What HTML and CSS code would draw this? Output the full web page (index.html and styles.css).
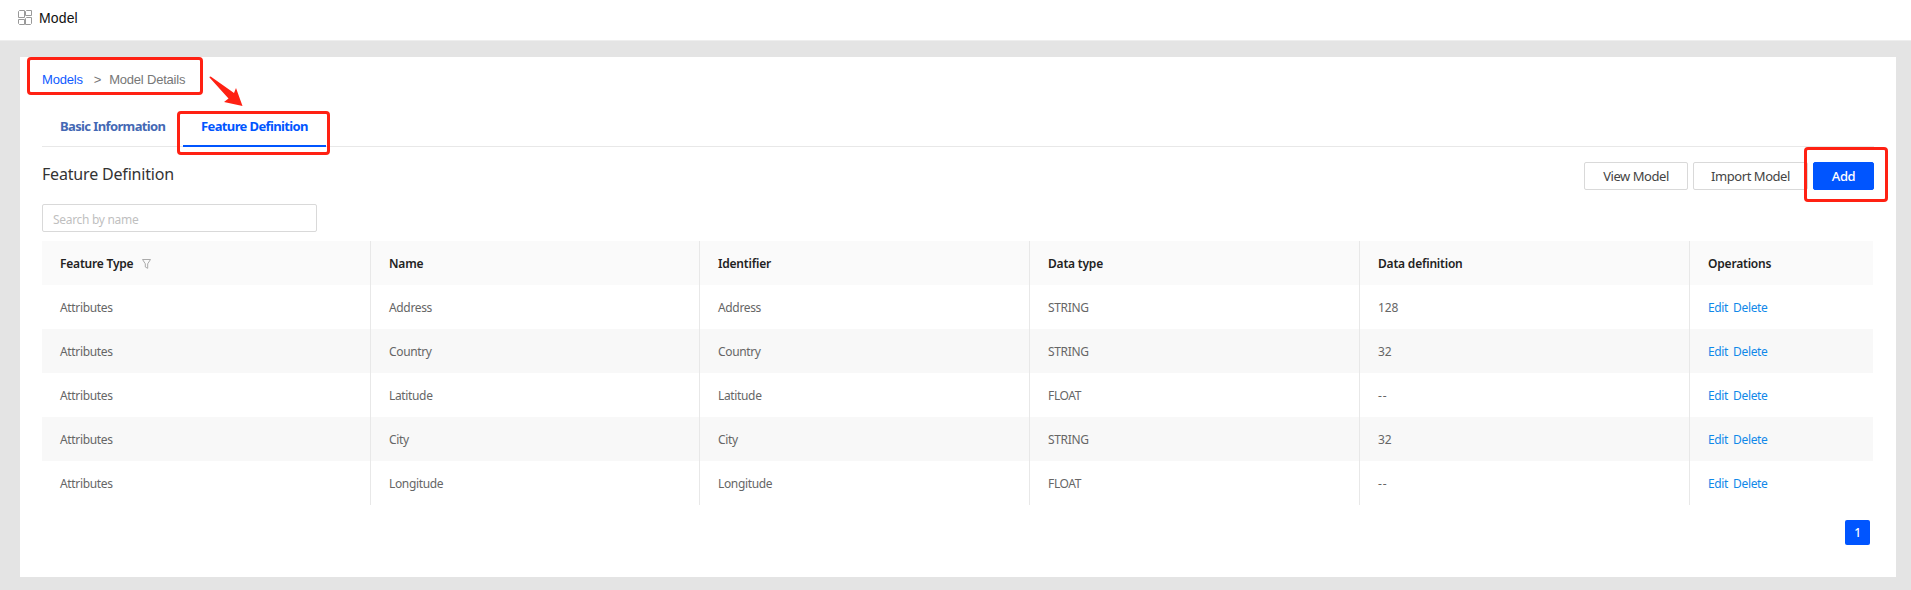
FILE: index.html
```html
<!DOCTYPE html>
<html lang="en">
<head>
<meta charset="utf-8">
<title>Model</title>
<link rel="stylesheet" href="styles.css">
</head>
<body>
<header class="topbar">
  <svg class="topbar-icon" width="14" height="15" viewBox="0 0 14 15" fill="none" stroke="#999"><path d="M1.500.5H6.500V7.500H.5V1.500zM8.500.5H13.500V5.500H7.500V1.500zM.5 9.500H6.500V14.500H1.500L.5 13.500zM8.500 7.500H13.500V13.500L12.500 14.500H7.500V8.500z"/></svg>
  <span class="topbar-title">Model</span>
</header>
<main class="panel">
  <nav class="breadcrumb"><a class="crumb-link" href="#">Models</a><span class="crumb-sep">&gt;</span><span>Model Details</span></nav>
  <div class="tabs">
    <div class="tab tab-basic">Basic Information</div>
    <div class="tab tab-active">Feature Definition</div>
  </div>
  <div class="heading">
    <h1 class="title">Feature Definition</h1>
    <div class="actions">
      <button class="btn btn-view">View Model</button>
      <button class="btn btn-import">Import Model</button>
      <button class="btn btn-add">Add</button>
    </div>
  </div>
  <input class="search" placeholder="Search by name">
  <div class="table">
    <div class="row row-head"><div class="cell">Feature Type<svg class="filter" width="9" height="10" viewBox="0 0 9 10" fill="none" stroke="#aaa"><path d="M.5.5h8L5.700 4.800v4.500L3.300 8V4.800z"/></svg></div><div class="cell">Name</div><div class="cell">Identifier</div><div class="cell">Data type</div><div class="cell">Data definition</div><div class="cell">Operations</div></div>
    <div class="row"><div class="cell">Attributes</div><div class="cell">Address</div><div class="cell">Address</div><div class="cell">STRING</div><div class="cell number">128</div><div class="cell ops"><a>Edit</a><a>Delete</a></div></div>
    <div class="row row-alt"><div class="cell">Attributes</div><div class="cell">Country</div><div class="cell">Country</div><div class="cell">STRING</div><div class="cell number">32</div><div class="cell ops"><a>Edit</a><a>Delete</a></div></div>
    <div class="row"><div class="cell">Attributes</div><div class="cell">Latitude</div><div class="cell">Latitude</div><div class="cell">FLOAT</div><div class="cell dash">--</div><div class="cell ops"><a>Edit</a><a>Delete</a></div></div>
    <div class="row row-alt"><div class="cell">Attributes</div><div class="cell">City</div><div class="cell">City</div><div class="cell">STRING</div><div class="cell number">32</div><div class="cell ops"><a>Edit</a><a>Delete</a></div></div>
    <div class="row"><div class="cell">Attributes</div><div class="cell">Longitude</div><div class="cell">Longitude</div><div class="cell">FLOAT</div><div class="cell dash">--</div><div class="cell ops"><a>Edit</a><a>Delete</a></div></div>
  </div>
  <div class="pager"><span class="page">1</span></div>
</main>
<div class="mark mark-crumb"></div>
<div class="mark mark-tab"></div>
<div class="mark mark-add"></div>
<svg class="arrow" width="34" height="30" viewBox="0 0 34 30"><path d="M.5 1.500Q.5 0 2 .7L25 17 27 12 33.500 30 15 26 19.500 22.500Z" fill="#ff2113"/></svg>
</body>
</html>
```

FILE: styles.css
```css
* { box-sizing: border-box; }
body {
  margin: 0;
  height: 590px;
  overflow: hidden;
  background: #e4e4e4;
  font-family: "Noto Sans", sans-serif;
  font-size: 12px;
  letter-spacing: -0.35px;
  color: #666;
}
a { text-decoration: none; }
.topbar {
  height: 41px;
  display: flex;
  align-items: center;
  padding: 0 0 5px 18px;
  background: #fff;
  border-bottom: 1px solid #eee;
}
.topbar-title {
  margin-left: 7px;
  font: 14px "Liberation Sans", sans-serif;
  letter-spacing: 0.15px;
  color: #111;
}
.panel {
  width: 1876px;
  height: 520px;
  margin: 16px 0 0 20px;
  padding: 0 22px;
  background: #fff;
}
.breadcrumb {
  height: 45px;
  display: flex;
  align-items: center;
  font: 13px "Liberation Sans", sans-serif;
  letter-spacing: -0.2px;
  color: #777;
}
.crumb-link { color: #0f5bff; }
.crumb-sep { margin: 0 8px 0 11px; }
.tabs {
  height: 45px;
  display: flex;
  border-bottom: 1px solid #e8e8e8;
}
.tab {
  height: 45px;
  line-height: 48px;
  font-size: 13px;
  font-weight: 700;
  letter-spacing: -0.62px;
  color: #4468b4;
  white-space: nowrap;
}
.tab-basic { width: 141px; padding-left: 18px; }
.tab-active {
  width: 143px;
  padding-left: 18px;
  color: #0055ff;
  border-bottom: 2px solid #0055ff;
}
.heading {
  height: 57px;
  padding-top: 15px;
  display: flex;
  justify-content: space-between;
}
.title {
  margin: 0;
  font-size: 16px;
  line-height: 24px;
  font-weight: 400;
  letter-spacing: -0.18px;
  color: #333;
}
.actions { display: flex; }
.btn {
  height: 28px;
  padding: 0;
  border: 1px solid #d9d9d9;
  border-radius: 2px;
  background: #fff;
  font: 13px/26px "Noto Sans", sans-serif;
  letter-spacing: -0.45px;
  color: #444;
}
.btn-view { width: 104px; margin-right: 5px; }
.btn-import { width: 115px; margin-right: 5px; }
.btn-add { width: 61px; background: #0055ff; border-color: #0055ff; color: #fff; font-weight: 500; }
.search {
  display: block;
  width: 275px;
  height: 28px;
  padding: 2px 11px 0 10px;
  border: 1px solid #d9d9d9;
  border-radius: 2px;
  font: 12px "Noto Sans", sans-serif;
  letter-spacing: -0.3px;
}
.search::placeholder { color: #bfbfbf; opacity: 1; }
.table { width: 1831px; margin-top: 9px; }
.row {
  height: 44px;
  display: grid;
  grid-template-columns: 329px 329px 330px 330px 330px 183px;
}
.row-head { background: #fafafa; font-weight: 600; color: #222; letter-spacing: -0.2px; }
.row-alt { background: #f8f8f8; }
.cell {
  display: flex;
  align-items: center;
  padding: 0 0 0 18px;
  border-right: 1px solid #e8e8e8;
}
.cell:last-child { border-right: 0; }
.number { letter-spacing: -0.1px; }
.dash { letter-spacing: 1px; }
.filter { margin: 2px 0 0 9px; }
.ops { gap: 5px; color: #1088e9; }
.pager { display: flex; justify-content: flex-end; padding: 15px 4px 0 0; }
.page {
  width: 25px;
  height: 25px;
  border-radius: 2px;
  background: #0055ff;
  color: #fff;
  line-height: 25px;
  text-align: center;
  font-weight: 500;
}
.mark { position: absolute; border: 3px solid #ff2113; border-radius: 4px; }
.mark-crumb { left: 27px; top: 57px; width: 176px; height: 38px; }
.mark-tab { left: 177px; top: 111px; width: 153px; height: 44px; }
.mark-add { left: 1804px; top: 147px; width: 84px; height: 55px; }
.arrow { position: absolute; left: 209px; top: 76px; }
```
